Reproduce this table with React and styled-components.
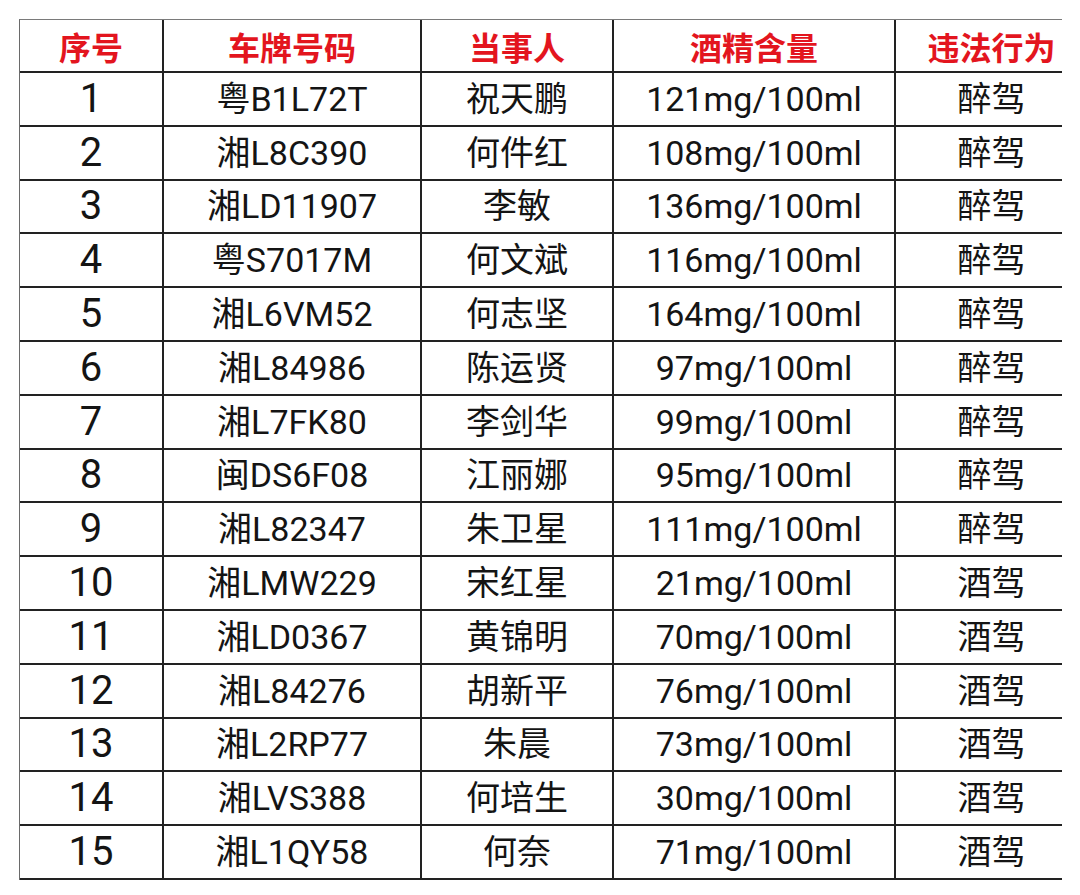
import React from "react"
import styled, { createGlobalStyle } from "styled-components"

const GlobalStyle = createGlobalStyle`
  html, body {
    margin: 0;
    padding: 0;
    background: #ffffff;
  }
  body {
    font-family: Roboto, "Noto Sans CJK SC", "Noto Sans", sans-serif;
    color: #111111;
  }
`

const Page = styled.div`
  width: 1080px;
  height: 895px;
  padding: 19px 0 0 19px;
  box-sizing: border-box;
  background: #ffffff;
  overflow: hidden;
`

const Table = styled.div`
  display: flex;
  flex-direction: column;
  width: 1042px;
  border-top: 1px solid #7a7a7a;
  border-left: 1px solid #6a6a6a;
`

const Row = styled.div`
  display: grid;
  grid-template-columns: 144px 258px 192px 282px 165px;
  height: ${(p) => (p.$header ? "53px" : "53.8px")};
  box-sizing: border-box;
  border-bottom: 2px solid #222222;
`

// the last column runs on past the right edge of the shot, so its text sits right of centre
const Cell = styled.div`
  display: flex;
  align-items: center;
  justify-content: center;
  box-sizing: border-box;
  padding-left: ${(p) => (p.$last ? "26px" : "0")};
  border-right: ${(p) => (p.$last ? "none" : "2px solid #222222")};
  font-family: Roboto, "Noto Sans CJK SC", sans-serif;
  font-size: ${(p) => (p.$big ? "40px" : "34px")};
  line-height: 1;
  white-space: nowrap;
  color: #141414;
`

const HeadCell = styled(Cell)`
  font-family: "Noto Sans CJK SC", sans-serif;
  font-size: 32px;
  font-weight: 700;
  color: #e3151e;
`

const columns = ["序号", "车牌号码", "当事人", "酒精含量", "违法行为"]

const records = [
  ["粤B1L72T", "祝天鹏", "121mg/100ml", "醉驾"],
  ["湘L8C390", "何件红", "108mg/100ml", "醉驾"],
  ["湘LD11907", "李敏", "136mg/100ml", "醉驾"],
  ["粤S7017M", "何文斌", "116mg/100ml", "醉驾"],
  ["湘L6VM52", "何志坚", "164mg/100ml", "醉驾"],
  ["湘L84986", "陈运贤", "97mg/100ml", "醉驾"],
  ["湘L7FK80", "李剑华", "99mg/100ml", "醉驾"],
  ["闽DS6F08", "江丽娜", "95mg/100ml", "醉驾"],
  ["湘L82347", "朱卫星", "111mg/100ml", "醉驾"],
  ["湘LMW229", "宋红星", "21mg/100ml", "酒驾"],
  ["湘LD0367", "黄锦明", "70mg/100ml", "酒驾"],
  ["湘L84276", "胡新平", "76mg/100ml", "酒驾"],
  ["湘L2RP77", "朱晨", "73mg/100ml", "酒驾"],
  ["湘LVS388", "何培生", "30mg/100ml", "酒驾"],
  ["湘L1QY58", "何奈", "71mg/100ml", "酒驾"],
]

export default function App() {
  return (
    <Page>
      <GlobalStyle />
      <Table>
        <Row $header>
          {columns.map((title, i) => (
            <HeadCell key={title} $last={i === columns.length - 1}>
              {title}
            </HeadCell>
          ))}
        </Row>
        {records.map((rec, idx) => {
          const cells = [String(idx + 1), ...rec]
          return (
            <Row key={rec[0]}>
              {cells.map((text, i) => (
                <Cell key={i} $big={i === 0} $last={i === cells.length - 1}>
                  {text}
                </Cell>
              ))}
            </Row>
          )
        })}
      </Table>
    </Page>
  )
}
